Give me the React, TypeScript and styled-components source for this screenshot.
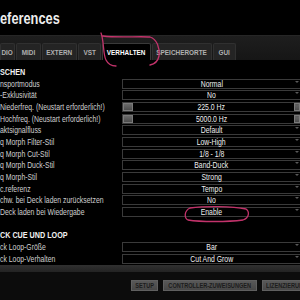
import styled, { createGlobalStyle } from "styled-components";

const GlobalStyle = createGlobalStyle`
  html, body {
    margin: 0;
    padding: 0;
    background: #000;
  }
  body {
    width: 300px;
    height: 300px;
    overflow: hidden;
    font-family: "Liberation Sans", Arial, sans-serif;
  }
`;

// The app uses a condensed face; squeeze Liberation Sans to its width
const Narrow = styled.span<{ $origin?: string }>`
  display: inline-block;
  white-space: nowrap;
  transform: scaleX(0.8);
  transform-origin: ${(p) => p.$origin ?? "center"};
`;

// Whole preferences window
const Window = styled.div`
  position: relative;
  width: 300px;
  height: 300px;
  display: flex;
  flex-direction: column;
  background: #000;
  overflow: hidden;
`;

const TitleBar = styled.div`
  height: 36px;
  flex: none;
  display: flex;
  align-items: center;
  box-sizing: border-box;
  padding-top: 2px;
  background: #000;
  border-bottom: 1px solid #262626;
`;

const Title = styled.h1`
  margin: 0;
  font-size: 16px;
  font-weight: 700;
  color: #ededed;
  white-space: nowrap;
`;

const TabBar = styled.div`
  height: 24px;
  flex: none;
  display: flex;
  align-items: flex-end;
  gap: 1px;
  background: linear-gradient(#1e1e1e, #161616);
`;

const Tab = styled.div<{ $active?: boolean; $w: number }>`
  width: ${(p) => p.$w}px;
  height: 17px;
  flex: none;
  display: flex;
  align-items: center;
  justify-content: center;
  box-sizing: border-box;
  background: ${(p) => (p.$active ? "#000" : "#242424")};
  border: 1px solid ${(p) => (p.$active ? "#3a3a3a" : "#303030")};
  border-bottom: none;
  border-radius: 2px 2px 0 0;
  font-size: 8px;
  font-weight: 700;
  color: ${(p) => (p.$active ? "#ffffff" : "#b0b0b0")};
  white-space: nowrap;
`;

const Content = styled.div`
  flex: none;
  padding-top: 6px;
  display: flex;
  flex-direction: column;
`;

const Row = styled.div`
  height: 11.7px;
  display: grid;
  grid-template-columns: 122px 1fr;
  align-items: center;
`;

const Header = styled.div`
  height: 11.7px;
  display: flex;
  align-items: center;
  font-size: 9px;
  font-weight: 700;
  color: #f2f2f2;
  white-space: nowrap;
`;

const Label = styled.div`
  font-size: 8.6px;
  color: #d0d0d0;
  white-space: nowrap;
`;

const ValueBox = styled.div`
  position: relative;
  height: 10px;
  box-sizing: border-box;
  border: 1px solid #3a3a3a;
  border-right: none;
  background: #000;
  display: flex;
  align-items: center;
  justify-content: center;
  font-size: 8.6px;
  color: #f0f0f0;
  white-space: nowrap;

  &::after {
    content: "";
    position: absolute;
    right: 1px;
    top: 1px;
    border-left: 2px solid transparent;
    border-right: 2px solid transparent;
    border-top: 2px solid #5a5a5a;
  }
`;

const Knob = styled.span<{ $side: "left" | "right" }>`
  position: absolute;
  top: 0;
  bottom: 0;
  ${(p) => (p.$side === "left" ? "left: 0; width: 10px;" : "right: 0; width: 6px;")}
  background: linear-gradient(#6a6a6a, #4c4c4c);
  border: 1px solid #7a7a7a;
  box-sizing: border-box;
`;

const Divider = styled.div`
  height: 7px;
  flex: none;
  background: linear-gradient(#303030, #232323);
`;

const Footer = styled.div`
  flex: 1;
  display: flex;
  align-items: center;
  gap: 5px;
  padding-left: 131px;
  background: #0c0c0c;
  white-space: nowrap;
`;

const Button = styled.div<{ $w: number }>`
  width: ${(p) => p.$w}px;
  height: 11px;
  flex: none;
  box-sizing: border-box;
  display: flex;
  align-items: center;
  justify-content: center;
  background: linear-gradient(#585858, #474747);
  border: 1px solid #606060;
  font-size: 7px;
  font-weight: 700;
  color: #1c1c1c;
`;

const Scribble = styled.svg`
  position: absolute;
  left: 0;
  top: 0;
  width: 300px;
  height: 300px;
  pointer-events: none;
`;

type Item =
  | { kind: "header"; label: string }
  | { kind: "blank" }
  | { kind: "row"; label: string; value: string; slider?: boolean };

const items: Item[] = [
  { kind: "header", label: "SCHEN" },
  { kind: "row", label: "nsportmodus", value: "Normal" },
  { kind: "row", label: "-Exklusivität", value: "No" },
  { kind: "row", label: "Niederfreq. (Neustart erforderlich!)", value: "225.0 Hz", slider: true },
  { kind: "row", label: "Hochfreq. (Neustart erforderlich!)", value: "5000.0 Hz", slider: true },
  { kind: "row", label: "aktsignalfluss", value: "Default" },
  { kind: "row", label: "q Morph Filter-Stil", value: "Low-High" },
  { kind: "row", label: "q Morph Cut-Stil", value: "1/8 - 1/8" },
  { kind: "row", label: "q Morph Duck-Stil", value: "Band-Duck" },
  { kind: "row", label: "q Morph-Stil", value: "Strong" },
  { kind: "row", label: "c.referenz", value: "Tempo" },
  { kind: "row", label: "chw. bei Deck laden zurücksetzen", value: "No" },
  { kind: "row", label: "Deck laden bei Wiedergabe", value: "Enable" },
  { kind: "blank" },
  { kind: "header", label: "CK CUE UND LOOP" },
  { kind: "row", label: "ck Loop-Größe", value: "Bar" },
  { kind: "row", label: "ck Loop-Verhalten", value: "Cut And Grow" },
];

const tabs = [
  { name: "DIO", w: 15 },
  { name: "MIDI", w: 25 },
  { name: "EXTERN", w: 35 },
  { name: "VST", w: 23 },
  { name: "VERHALTEN", w: 49, active: true },
  { name: "SPEICHERORTE", w: 60 },
  { name: "GUI", w: 23 },
];

export default function App() {
  return (
    <Window>
      <GlobalStyle />
      <TitleBar>
        <Title>
          <Narrow $origin="left">eferences</Narrow>
        </Title>
      </TitleBar>
      <TabBar>
        {tabs.map((t) => (
          <Tab key={t.name} $w={t.w} $active={t.active}>
            <Narrow>{t.name}</Narrow>
          </Tab>
        ))}
      </TabBar>
      <Content>
        {items.map((it, i) => {
          if (it.kind === "header")
            return (
              <Header key={i}>
                <Narrow $origin="left">{it.label}</Narrow>
              </Header>
            );
          if (it.kind === "blank") return <Row key={i} />;
          return (
            <Row key={i}>
              <Label>
                <Narrow $origin="left">{it.label}</Narrow>
              </Label>
              <ValueBox>
                {it.slider && <Knob $side="left" />}
                <Narrow>{it.value}</Narrow>
                {it.slider && <Knob $side="right" />}
              </ValueBox>
            </Row>
          );
        })}
      </Content>
      <Divider />
      <Footer>
        <Button $w={27}>
          <Narrow>SETUP</Narrow>
        </Button>
        <Button $w={94}>
          <Narrow>CONTROLLER-ZUWEISUNGEN</Narrow>
        </Button>
        <Button $w={60}>
          <Narrow $origin="left">LIZENZIERUNG</Narrow>
        </Button>
      </Footer>
      {/* hand-drawn pink marks over the screenshot */}
      <Scribble viewBox="0 0 300 300">
        <path
          d="M101 33 C104 40 103 55 106 60 C108 64 112 66 116 66 M103 36 C118 38 140 36 150 37 C157 39 160 48 159 56 C158 61 155 64 150 65"
          fill="none"
          stroke="#c3336b"
          strokeWidth="1.3"
          strokeLinecap="round"
        />
        <path
          d="M190 208 C205 206 232 206 246 209 C250 212 249 218 243 220 C228 222 200 222 188 220 C184 218 184 211 190 208"
          fill="none"
          stroke="#c3336b"
          strokeWidth="1.3"
          strokeLinecap="round"
        />
      </Scribble>
    </Window>
  );
}
